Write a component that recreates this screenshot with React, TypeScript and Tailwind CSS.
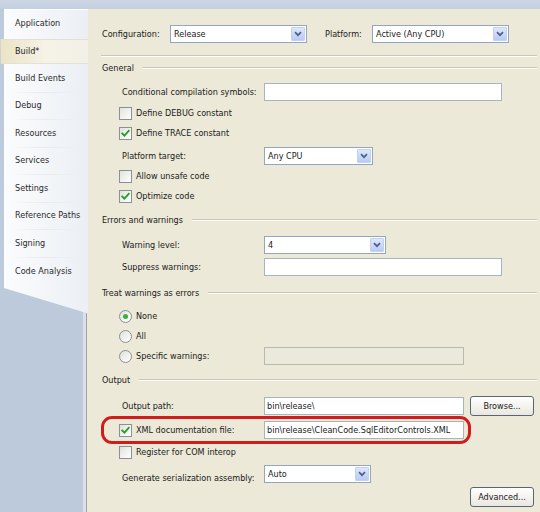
import React from "react";

const FONT = {
  fontFamily: '"DejaVu Sans Condensed", "Liberation Sans", Arial, sans-serif',
};

const tabs = [
  "Application",
  "Build*",
  "Build Events",
  "Debug",
  "Resources",
  "Services",
  "Settings",
  "Reference Paths",
  "Signing",
  "Code Analysis",
];

function CheckMark() {
  return (
    <svg width="9" height="9" viewBox="0 0 9 9" className="block">
      <polyline
        points="1.2,4.4 3.4,6.6 7.8,1.8"
        fill="none"
        stroke="#21a121"
        strokeWidth="1.8"
        strokeLinecap="square"
      />
    </svg>
  );
}

function Check({ checked }: { checked?: boolean }) {
  return (
    <span className="flex items-center justify-center w-[13px] h-[13px] shrink-0 border border-[#8a9096] bg-gradient-to-br from-[#e2e2dc] to-white">
      {checked ? <CheckMark /> : null}
    </span>
  );
}

function Radio({ checked }: { checked?: boolean }) {
  return (
    <span className="flex items-center justify-center w-[13px] h-[13px] shrink-0 rounded-full border border-[#8a9096] bg-gradient-to-br from-[#e0e0da] to-white">
      {checked ? (
        <span className="w-[5px] h-[5px] rounded-full bg-[#3bb03b]" />
      ) : null}
    </span>
  );
}

function Chevron() {
  return (
    <svg width="8" height="6" viewBox="0 0 8 6" className="block">
      <polyline
        points="1,1.2 4,4.2 7,1.2"
        fill="none"
        stroke="#4d6185"
        strokeWidth="1.7"
      />
    </svg>
  );
}

function Select({ value, w }: { value: string; w: string }) {
  return (
    <div
      className={`flex items-stretch h-[18px] shrink-0 border border-[#93a6be] bg-white ${w}`}
    >
      <span className="flex-1 flex items-center pl-[3px] text-[#1a1a1a] leading-none">
        {value}
      </span>
      <span className="flex items-center justify-center w-[14px] my-[1px] mr-[1px] rounded-[1px] border border-[#c3d0ef] bg-gradient-to-b from-[#dde7fd] to-[#b8cbf4]">
        <Chevron />
      </span>
    </div>
  );
}

function TextBox({
  value,
  w,
  disabled,
}: {
  value?: string;
  w: string;
  disabled?: boolean;
}) {
  return (
    <div
      className={`flex items-center h-[18px] shrink-0 pl-[2px] leading-none ${w} ${
        disabled
          ? "border border-[#b9b8ad] bg-[#ebe9dc]"
          : "border border-[#a9b4c2] bg-white text-[#1a1a1a]"
      }`}
    >
      {value}
    </div>
  );
}

function Button({ label }: { label: string }) {
  return (
    <div className="flex items-center justify-center w-[64px] h-[20px] shrink-0 rounded-[3px] border border-[#5d6571] bg-gradient-to-b from-white to-[#e9e7df] text-[#1a1a1a] leading-none">
      {label}
    </div>
  );
}

function Etched({ className = "" }: { className?: string }) {
  return (
    <div
      className={`h-[2px] border-t border-[#c9c6b6] border-b border-b-white ${className}`}
    />
  );
}

function Header({ title, mt }: { title: string; mt: string }) {
  return (
    <div className={`flex items-center h-[14px] gap-[9px] ${mt}`}>
      <span className="text-[#1a1a1a] leading-none">{title}</span>
      <Etched className="flex-1" />
    </div>
  );
}

function CheckRow({
  label,
  checked,
  mt,
}: {
  label: string;
  checked?: boolean;
  mt: string;
}) {
  return (
    <div className={`flex items-center h-[16px] pl-[17px] gap-[4px] ${mt}`}>
      <Check checked={checked} />
      <span className="leading-none text-[#1a1a1a]">{label}</span>
    </div>
  );
}

function RadioRow({
  label,
  checked,
  mt,
  children,
}: {
  label: string;
  checked?: boolean;
  mt: string;
  children?: React.ReactNode;
}) {
  return (
    <div className={`flex items-center h-[18px] pl-[17px] ${mt}`}>
      <span className="flex items-center gap-[4px] w-[145px]">
        <Radio checked={checked} />
        <span className="leading-none text-[#1a1a1a]">{label}</span>
      </span>
      {children}
    </div>
  );
}

function FieldRow({
  label,
  mt,
  labelClass = "",
  children,
}: {
  label: string;
  mt: string;
  labelClass?: string;
  children: React.ReactNode;
}) {
  return (
    <div className={`flex items-center h-[18px] pl-[20px] ${mt}`}>
      <span
        className={`w-[142px] shrink-0 leading-none text-[#1a1a1a] ${labelClass}`}
      >
        {label}
      </span>
      {children}
    </div>
  );
}

export default function App() {
  return (
    <div
      className="w-[540px] h-[512px] overflow-hidden flex flex-col bg-[#bdcadb] text-[9px]"
      style={FONT}
    >
      <div className="h-[9px] shrink-0 bg-gradient-to-b from-[#cdd6e4] to-[#c3cfdf]" />
      <div className="flex flex-1 min-h-0">
        {/* property page tabs */}
        <aside className="w-[83px] shrink-0 flex">
          <div className="w-[4px] shrink-0" />
          <nav className="flex-1 h-[308px] flex flex-col border-t border-white bg-gradient-to-r from-[#fbfcfd] to-[#ebeff4] [clip-path:polygon(-4px_0,calc(100%+5px)_0,calc(100%+5px)_306px,0_279px)]">
            {tabs.map((t, i) => {
              const active = i === 1;
              return (
                <div
                  key={t}
                  className={`h-[27.5px] shrink-0 flex flex-col ${
                    active ? "-ml-[4px] w-[88px] relative z-10" : ""
                  }`}
                >
                  <div
                    className={`flex-1 flex items-center leading-none ${
                      active
                        ? "my-[1px] pl-[15px] bg-gradient-to-r from-[#ebe3c4] via-[#f5f2e6] to-[#f2f0e6] border-y border-[#e4e1d4] text-[#1c1c1c]"
                        : "pl-[11px] text-[#2a2a2a]"
                    }`}
                  >
                    {t}
                  </div>
                  {!active && i !== 0 && i !== 9 ? (
                    <div className="h-px mx-[10px] bg-gradient-to-r from-transparent via-[#e6e9ee] to-transparent" />
                  ) : null}
                </div>
              );
            })}
          </nav>
        </aside>

        <div className="w-[3px] shrink-0 bg-[#d9e0ea]" />

        {/* build settings page */}
        <main className="flex-1 flex flex-col bg-[#ece9d8] border-l border-[#9ea2a6] pl-[15px] pr-[3px]">
          <div className="flex items-center h-[18px] mt-[16px]">
            <span className="w-[68px] leading-none text-[#1a1a1a]">
              Configuration:
            </span>
            <Select value="Release" w="w-[137px]" />
            <span className="ml-[18px] w-[47px] leading-none text-[#1a1a1a]">
              Platform:
            </span>
            <Select value="Active (Any CPU)" w="w-[137px]" />
          </div>

          <Etched className="mt-[12px] -ml-[1px]" />

          <Header title="General" mt="mt-[4px]" />
          <FieldRow label="Conditional compilation symbols:" mt="mt-[8px]">
            <TextBox w="w-[238px]" />
          </FieldRow>
          <CheckRow label="Define DEBUG constant" mt="mt-[4px]" />
          <CheckRow label="Define TRACE constant" checked mt="mt-[4px]" />
          <FieldRow label="Platform target:" mt="mt-[6px]">
            <Select value="Any CPU" w="w-[109px]" />
          </FieldRow>
          <CheckRow label="Allow unsafe code" mt="mt-[3px]" />
          <CheckRow label="Optimize code" checked mt="mt-[4px]" />

          <Header title="Errors and warnings" mt="mt-[9px]" />
          <FieldRow label="Warning level:" mt="mt-[9px]">
            <Select value="4" w="w-[122px]" />
          </FieldRow>
          <FieldRow label="Suppress warnings:" mt="mt-[4px]">
            <TextBox w="w-[238px]" />
          </FieldRow>

          <Header title="Treat warnings as errors" mt="mt-[10px]" />
          <RadioRow label="None" checked mt="mt-[7px]" />
          <RadioRow label="All" mt="mt-[2px]" />
          <RadioRow label="Specific warnings:" mt="mt-[2px]">
            <TextBox w="w-[200px]" disabled />
          </RadioRow>

          <Header title="Output" mt="mt-[8px]" />
          <div className="flex items-center h-[20px] pl-[20px] mt-[9px]">
            <span className="w-[142px] shrink-0 leading-none text-[#1a1a1a]">
              Output path:
            </span>
            <TextBox value="bin\release\" w="w-[200px]" />
            <span className="ml-[6px]">
              <Button label="Browse..." />
            </span>
          </div>

          <div className="flex items-center w-[370px] h-[28px] -ml-[1px] pl-[15px] rounded-[11px] border-[3px] border-[#d21c1c]">
            <span className="flex items-center gap-[4px] w-[145px] shrink-0">
              <Check checked />
              <span className="leading-none text-[#1a1a1a]">
                XML documentation file:
              </span>
            </span>
            <TextBox
              value="bin\release\CleanCode.SqlEditorControls.XML"
              w="w-[200px]"
            />
          </div>

          <CheckRow label="Register for COM interop" mt="mt-0" />
          <FieldRow
            label="Generate serialization assembly:"
            mt="mt-[5px]"
            labelClass="pt-[9px]"
          >
            <Select value="Auto" w="w-[107px]" />
          </FieldRow>

          <div className="flex justify-end mt-[4px] pr-[3px]">
            <Button label="Advanced..." />
          </div>
        </main>
      </div>
    </div>
  );
}
